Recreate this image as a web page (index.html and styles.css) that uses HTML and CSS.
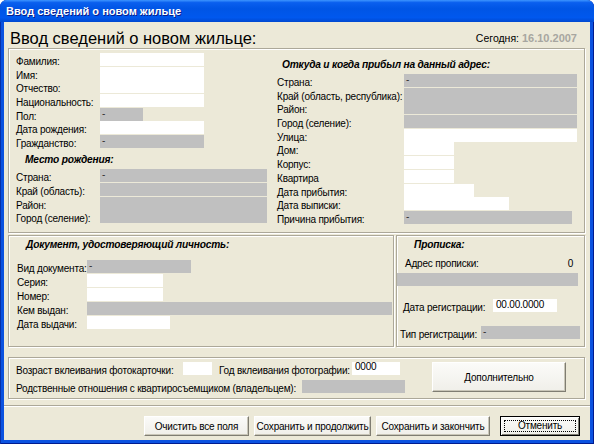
FILE: index.html
```html
<!DOCTYPE html>
<html lang="ru">
<head>
  <meta charset="UTF-8" />
  <title>Ввод сведений о новом жильце</title>
  <link rel="stylesheet" href="styles.css">
</head>
<body>
<div class="window">
  <div class="titlebar">Ввод сведений о новом жильце</div>

  <div class="client">

    <div class="head">
      <h1>Ввод сведений о новом жильце:</h1>
      <div class="today">Сегодня: <b>16.10.2007</b></div>
    </div>

    <!-- Личные данные + адрес прибытия -->
    <div class="group top">
      <div class="col col-person">
        <div class="form form-person">
          <span class="lbl">Фамилия:</span><span class="fld w104"></span>
          <span class="lbl">Имя:</span><span class="fld w104"></span>
          <span class="lbl">Отчество:</span><span class="fld w104"></span>
          <span class="lbl">Национальность:</span><span class="fld w104"></span>
          <span class="lbl">Пол:</span><span class="fld gray w43">-</span>
          <span class="lbl">Дата рождения:</span><span class="fld w104"></span>
          <span class="lbl">Гражданство:</span><span class="fld gray w104">-</span>
        </div>
        <div class="section birth">Место рождения:</div>
        <div class="form form-person">
          <span class="lbl">Страна:</span><span class="fld gray w167">-</span>
          <span class="lbl">Край (область):</span><span class="fld gray w167"></span>
          <span class="lbl">Район:</span><span class="fld gray w167"></span>
          <span class="lbl">Город (селение):</span><span class="fld gray w167"></span>
        </div>
      </div>

      <div class="col col-arrival">
        <div class="section arrival">Откуда и когда прибыл на данный адрес:</div>
        <div class="form form-arrival">
          <span class="lbl">Страна:</span><span class="fld gray w173">-</span>
          <span class="lbl">Край (область, республика):</span><span class="fld gray w173"></span>
          <span class="lbl">Район:</span><span class="fld gray w173"></span>
          <span class="lbl">Город (селение):</span><span class="fld gray w173"></span>
          <span class="lbl">Улица:</span><span class="fld w173"></span>
          <span class="lbl">Дом:</span><span class="fld w50"></span>
          <span class="lbl">Корпус:</span><span class="fld w50"></span>
          <span class="lbl">Квартира</span><span class="fld w50"></span>
          <span class="lbl">Дата прибытия:</span><span class="fld w70"></span>
          <span class="lbl">Дата выписки:</span><span class="fld w105"></span>
          <span class="lbl">Причина прибытия:</span><span class="fld gray w168">-</span>
        </div>
      </div>
    </div>

    <div class="middle">
      <!-- Документ -->
      <div class="group doc">
        <div class="section doc-title">Документ, удостоверяющий личность:</div>
        <div class="form form-doc">
          <span class="lbl">Вид документа:</span><span class="fld gray w104">-</span>
          <span class="lbl">Серия:</span><span class="fld w76"></span>
          <span class="lbl">Номер:</span><span class="fld w76"></span>
          <span class="lbl">Кем выдан:</span><span class="fld gray w305"></span>
          <span class="lbl">Дата выдачи:</span><span class="fld w83"></span>
        </div>
      </div>

      <!-- Прописка -->
      <div class="group reg">
        <div class="section reg-title">Прописка:</div>
        <div class="reg-addr">
          <span>Адрес прописки:</span>
          <span>0</span>
        </div>
        <div class="fld gray reg-bar"></div>
        <div class="reg-row reg-date">
          <span class="lbl">Дата регистрации:</span>
          <span class="fld w64 value">00.00.0000</span>
        </div>
        <div class="reg-row reg-type">
          <span class="lbl">Тип регистрации:</span>
          <span class="fld gray w99">-</span>
        </div>
      </div>
    </div>

    <div class="group extra">
      <div class="extra-fields">
        <div class="extra-row">
          <span class="lbl photo-age">Возраст вклеивания фотокарточки:</span>
          <span class="fld w29"></span>
          <span class="lbl photo-year">Год вклеивания фотографии:</span>
          <span class="fld w48 value">0000</span>
        </div>
        <div class="extra-row row-relation">
          <span class="lbl relation">Родственные отношения с квартиросъемщиком (владельцем):</span>
          <span class="fld gray w103"></span>
        </div>
      </div>
      <button class="btn btn-more">Дополнительно</button>
    </div>

    <div class="separator"></div>

    <div class="buttons">
      <button class="btn btn-clear">Очистить все поля</button>
      <button class="btn btn-next">Сохранить и продолжить</button>
      <button class="btn btn-finish">Сохранить и закончить</button>
      <button class="btn btn-cancel"><span class="focus">Отменить</span></button>
    </div>

  </div>
</div>
</body>
</html>
```

FILE: styles.css
```css
:root {
  --face: #ece9d8;
  --etch: #aca899;
  --field-gray: #c0c0c0;
  --frame: #0b52e0;
}

* {
  box-sizing: border-box;
}

body {
  margin: 0;
  background: #fff;
  font-family: "Liberation Sans", Arial, sans-serif;
  font-size: 10px;
  letter-spacing: -0.2px;
  color: #000;
}

/* окно в стиле XP */
.window {
  width: 594px;
  height: 444px;
  display: flex;
  flex-direction: column;
  background: var(--frame);
  border-radius: 7px 7px 0 0;
  overflow: hidden;
  box-shadow: inset 1px 0 #0831a8, inset -1px 0 #001b8f, inset 0 -1px #001b8f;
}

.titlebar {
  flex: none;
  height: 22px;
  padding: 0 6px;
  display: flex;
  align-items: center;
  background: linear-gradient(to bottom, #3d95ff 0, #0a5fee 12%, #0055e5 40%, #0058ee 80%, #0048d0 100%);
  color: #fff;
  font-size: 11px;
  font-weight: bold;
  letter-spacing: 0;
  text-shadow: 1px 1px #0a1d8a;
}

.client {
  flex: 1;
  margin: 0 4px 4px;
  background: var(--face);
  display: flex;
  flex-direction: column;
}

.head {
  height: 26px;
  padding: 6px 13px 0 6px;
  display: flex;
  align-items: center;
  justify-content: space-between;
}

.head h1 {
  margin: 0;
  font-size: 16.5px;
  font-weight: normal;
  letter-spacing: 0;
  line-height: 20px;
}

.today {
  font-size: 10.5px;
  letter-spacing: 0;
}

.today b {
  font-size: 11px;
  color: #a7a6a0;
}

/* рамка группы с вдавленной линией */
.group {
  border: 1px solid var(--etch);
  box-shadow: inset 1px 1px #fff, 1px 1px #fff;
}

.section {
  font-weight: bold;
  font-style: italic;
  font-size: 10.2px;
  line-height: 12px;
}

.form {
  display: grid;
  grid-auto-rows: 13px;
  row-gap: 0.7px;
}

.lbl {
  line-height: 12px;
  padding-top: 3px;
  white-space: nowrap;
}

.fld {
  display: block;
  height: 13px;
  background: #fff;
  padding-left: 2px;
  line-height: 11px;
  color: #333;
}

.fld.gray {
  background: var(--field-gray);
}

.fld.value {
  color: #000;
}

.w29 { width: 29px; }
.w43 { width: 43px; }
.w48 { width: 48px; }
.w50 { width: 50px; }
.w64 { width: 64px; }
.w70 { width: 70px; }
.w76 { width: 76px; }
.w83 { width: 83px; }
.w99 { width: 99px; }
.w103 { width: 103px; }
.w104 { width: 104px; }
.w105 { width: 105px; }
.w167 { width: 167px; }
.w168 { width: 168px; }
.w173 { width: 173px; }
.w305 { width: 305px; }

/* верхний блок */
.top {
  height: 185px;
  margin: 0 5px 0 4px;
  padding-top: 4px;
  display: flex;
}

.col-person {
  width: 268px;
  padding-left: 7px;
}

.form-person {
  grid-template-columns: 84px auto;
}

.birth {
  height: 21px;
  padding: 6px 0 0 9px;
}

.col-arrival {
  flex: 1;
}

.arrival {
  height: 21px;
  padding: 6px 0 0 5px;
}

.form-arrival {
  grid-template-columns: 127px auto;
}

/* документ и прописка */
.middle {
  height: 112px;
  margin: 2px 5px 0 4px;
  display: flex;
  gap: 2px;
}

.doc {
  width: 386px;
  padding-left: 8px;
}

.doc-title {
  height: 24px;
  padding: 3px 0 0 9px;
}

.form-doc {
  grid-template-columns: 70px auto;
  row-gap: 1px;
}

.reg {
  flex: 1;
}

.reg-title {
  height: 21px;
  padding: 3px 0 0 17px;
}

.reg-addr {
  height: 13px;
  line-height: 13px;
  padding: 0 11px 0 8px;
  display: flex;
  justify-content: space-between;
}

.reg-bar {
  width: 181px;
  margin-top: 3px;
}

.reg-row {
  display: flex;
}

.reg-date {
  margin-top: 13px;
}

.reg-date .lbl {
  width: 96px;
  padding-left: 6px;
}

.reg-date .value {
  padding-left: 3px;
}

.reg-type {
  margin-top: 12px;
}

.reg-type .lbl {
  width: 84px;
  padding-left: 3px;
}

/* нижний блок */
.extra {
  height: 42px;
  margin: 10px 5px 0 4px;
  padding: 4px 0 0 7px;
  display: flex;
  align-items: flex-start;
}

.extra-row {
  display: flex;
}

.photo-age {
  width: 167px;
}

.photo-year {
  width: 133px;
  margin-left: 7px;
}

.row-relation {
  margin-top: 3px;
}

.relation {
  width: 286px;
}

.extra .value {
  line-height: 9px;
  padding-left: 3px;
}

.separator {
  margin-top: 6px;
  height: 2px;
  border-top: 1px solid var(--etch);
  border-bottom: 1px solid #fff;
}

.btn {
  font-family: inherit;
  font-size: 10px;
  letter-spacing: -0.2px;
  white-space: nowrap;
  color: #000;
  padding: 0;
  height: 20px;
  background: linear-gradient(to bottom, #fbfbf9, #f0efe9);
  border: 1px solid;
  border-color: #fff #7f7d72 #7f7d72 #fff;
  box-shadow: inset -1px -1px #c9c6b8;
}

.btn-more {
  width: 134px;
  height: 30px;
  margin: 0 0 0 27px;
}

.buttons {
  margin-top: 9px;
  padding-right: 10px;
  display: flex;
  justify-content: flex-end;
  gap: 5px;
}

.btn-clear { width: 105px; }
.btn-next { width: 117px; }
.btn-finish { width: 114px; margin-right: 5px; }

.btn-cancel {
  width: 80px;
  border: 1px solid #000;
  box-shadow: inset 1px 1px #fff, inset -1px -1px #7f7d72;
  padding: 3px;
}

.btn-cancel .focus {
  display: block;
  height: 100%;
  line-height: 10px;
  border: 1px dotted #000;
}
```
